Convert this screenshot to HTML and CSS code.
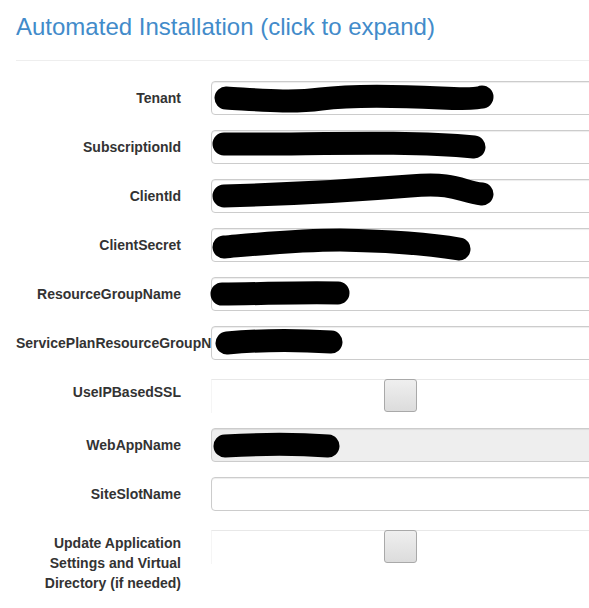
FILE: index.html
```html
<!DOCTYPE html>
<html>
<head>
<meta charset="utf-8">
<link rel="stylesheet" href="styles.css">
</head>
<body>
<div class="page">
  <h3 class="title">Automated Installation (click to expand)</h3>
  <hr class="rule">
  <form class="form">
    <div class="group">
      <label class="label">Tenant</label>
      <div class="field">
        <div class="input"></div>
        <svg class="redact" viewBox="0 0 378 34"><path d="M15 17 C 50 19, 80 22, 110 18 S 190 15, 230 17 S 270 16, 271 16"/></svg>
      </div>
    </div>
    <div class="group">
      <label class="label">SubscriptionId</label>
      <div class="field">
        <div class="input"></div>
        <svg class="redact" viewBox="0 0 378 34"><path d="M13 14 C 90 15, 190 10, 263 17"/></svg>
      </div>
    </div>
    <div class="group">
      <label class="label">ClientId</label>
      <div class="field">
        <div class="input"></div>
        <svg class="redact" viewBox="0 0 378 34"><path d="M13 17 C 90 15, 150 11, 199 7 S 249 13, 271 15"/></svg>
      </div>
    </div>
    <div class="group">
      <label class="label">ClientSecret</label>
      <div class="field">
        <div class="input"></div>
        <svg class="redact" viewBox="0 0 378 34"><path d="M13 19 C 59 15, 89 12, 129 12 C 179 13, 219 16, 248 21"/></svg>
      </div>
    </div>
    <div class="group">
      <label class="label">ResourceGroupName</label>
      <div class="field">
        <div class="input"></div>
        <svg class="redact" viewBox="0 0 378 34"><path d="M11 17 C 49 17, 89 15, 127 16"/></svg>
      </div>
    </div>
    <div class="group">
      <label class="label label-nowrap">ServicePlanResourceGroupName</label>
      <div class="field">
        <div class="input"></div>
        <svg class="redact" viewBox="0 0 378 34"><path d="M16 17 C 49 14, 89 14, 120 16"/></svg>
      </div>
    </div>
    <div class="group">
      <label class="label">UseIPBasedSSL</label>
      <div class="field">
        <div class="check-panel"><span class="checkbox"></span></div>
      </div>
    </div>
    <div class="group">
      <label class="label">WebAppName</label>
      <div class="field">
        <div class="input input-disabled"></div>
        <svg class="redact" viewBox="0 0 378 34"><path d="M14 18 C 49 16, 89 16, 117 18"/></svg>
      </div>
    </div>
    <div class="group">
      <label class="label">SiteSlotName</label>
      <div class="field">
        <div class="input"></div>
      </div>
    </div>
    <div class="group">
      <label class="label">Update Application Settings and Virtual Directory (if needed)</label>
      <div class="field">
        <div class="check-panel"><span class="checkbox"></span></div>
      </div>
    </div>
  </form>
</div>
</body>
</html>
```

FILE: styles.css
```css
html, body {
  margin: 0;
  padding: 0;
  background: #fff;
  overflow: hidden;
}

.page {
  padding-left: 16px;
  font-family: "Liberation Sans", Arial, sans-serif;
  color: #333;
  overflow: hidden;
}

.title {
  margin: 14px 0 0;
  font-size: 24px;
  font-weight: normal;
  line-height: 26.4px;
  color: #428bca;
}

.rule {
  margin: 20px 0 20px;
  border: 0;
  border-top: 1px solid #eee;
  height: 0;
}

.form {
  display: flex;
  flex-direction: column;
  gap: 15px;
}

.group {
  display: grid;
  grid-template-columns: 165px 1fr;
  column-gap: 30px;
}

.label {
  padding-top: 7px;
  font-size: 14px;
  line-height: 20px;
  font-weight: bold;
  text-align: right;
  color: #333;
}

.label-nowrap {
  white-space: nowrap;
}

.field {
  position: relative;
  min-height: 34px;
}

.input {
  box-sizing: border-box;
  height: 34px;
  width: calc(100% + 6px);
  border: 1px solid #ccc;
  border-radius: 4px;
  background: #fff;
  box-shadow: inset 0 1px 1px rgba(0, 0, 0, 0.075);
}

.input-disabled {
  background: #eee;
}

.redact {
  position: absolute;
  left: 0;
  top: 0;
  width: 378px;
  height: 34px;
  overflow: visible;
}

.redact path {
  fill: none;
  stroke: #000;
  stroke-width: 23;
  stroke-linecap: round;
  stroke-linejoin: round;
}

.check-panel {
  box-sizing: border-box;
  margin-top: 4px;
  height: 34px;
  border-top: 1px solid #e8e8e8;
  border-left: 1px solid #f5f5f5;
  display: flex;
  justify-content: center;
  align-items: flex-start;
}

.checkbox {
  box-sizing: border-box;
  display: block;
  width: 33px;
  height: 33px;
  margin-top: -1px;
  border: 1px solid #a9a9a9;
  border-radius: 3px;
  background: linear-gradient(#efefef, #dcdcdc);
}
```
